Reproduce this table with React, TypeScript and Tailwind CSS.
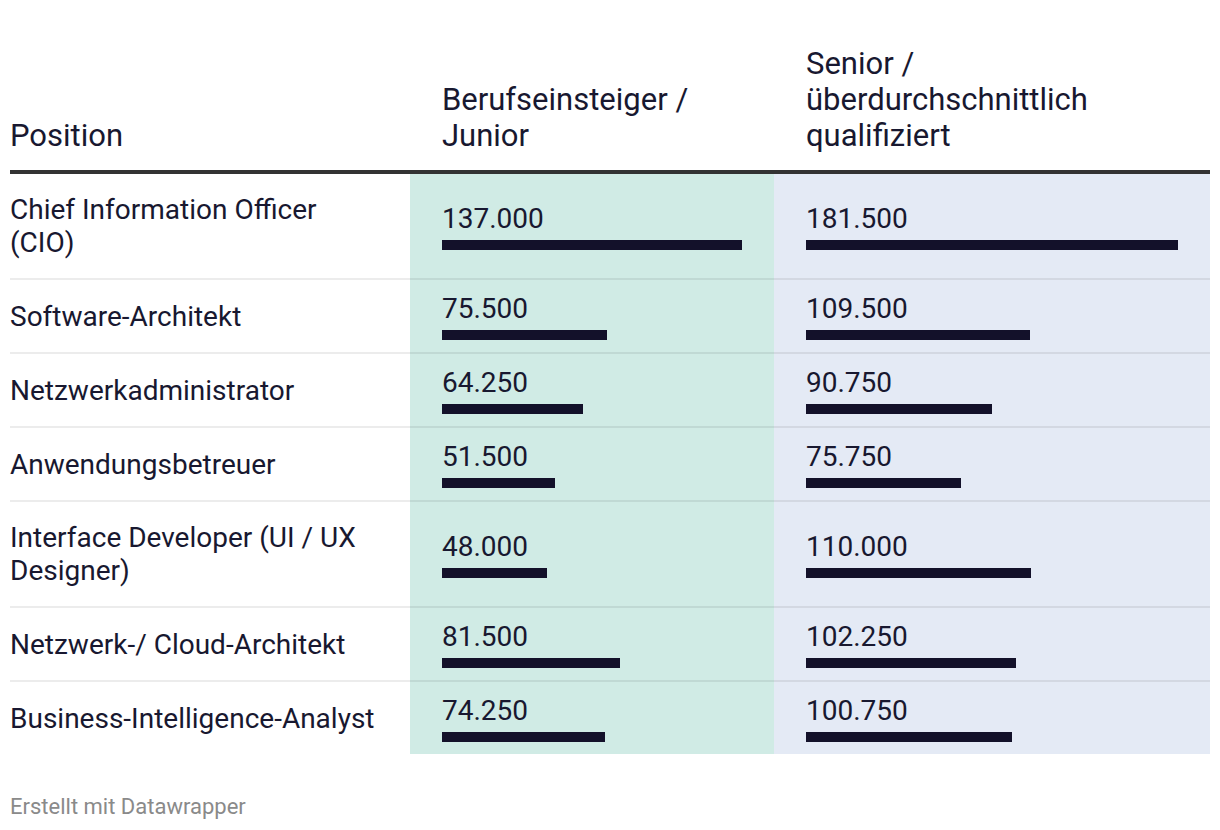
type Row = {
  position: string;
  junior: number;
  senior: number;
};

const rows: Row[] = [
  { position: "Chief Information Officer (CIO)", junior: 137000, senior: 181500 },
  { position: "Software-Architekt", junior: 75500, senior: 109500 },
  { position: "Netzwerkadministrator", junior: 64250, senior: 90750 },
  { position: "Anwendungsbetreuer", junior: 51500, senior: 75750 },
  { position: "Interface Developer (UI / UX Designer)", junior: 48000, senior: 110000 },
  { position: "Netzwerk-/ Cloud-Architekt", junior: 81500, senior: 102250 },
  { position: "Business-Intelligence-Analyst", junior: 74250, senior: 100750 },
];

const maxJunior = Math.max(...rows.map((r) => r.junior));
const maxSenior = Math.max(...rows.map((r) => r.senior));

const fmt = (n: number) => n.toLocaleString("de-DE");

function BarCell({ value, max, bg, last }: { value: number; max: number; bg: string; last: boolean }) {
  return (
    <div
      className={`${bg} ${last ? "" : "border-b-2 border-[rgba(0,0,0,0.075)]"} flex flex-col justify-center px-8`}
    >
      <div className="text-[28px] leading-[33px]">{fmt(value)}</div>
      <div className="mt-[5px] h-[10px] bg-[#13112a]" style={{ width: `${(value / max) * 100}%` }} />
    </div>
  );
}

export default function App() {
  return (
    <div className="min-h-[830px] bg-white px-[10px] pt-[46px] font-['Roboto',sans-serif] text-[#181830]">
      {/* Kopfzeile */}
      <div className="grid grid-cols-[400px_364px_436px] border-b-4 border-[#333333] text-[31px] leading-[36px]">
        <div className="flex items-end pb-[16px] pr-8">Position</div>
        <div className="flex items-end px-8 pb-[16px]">Berufseinsteiger / Junior</div>
        <div className="flex items-end px-8 pb-[16px]">Senior / überdurchschnittlich qualifiziert</div>
      </div>

      {/* Zeilen */}
      {rows.map((row, i) => {
        const last = i === rows.length - 1;
        return (
          <div key={row.position} className="grid grid-cols-[400px_364px_436px]">
            <div
              className={`${
                last ? "min-h-[72px]" : "min-h-[74px] border-b-2 border-[rgba(0,0,0,0.075)]"
              } flex items-center py-[19px] pr-[30px] text-[28px] leading-[33px]`}
            >
              {row.position}
            </div>
            <BarCell value={row.junior} max={maxJunior} bg="bg-[#d0ebe5]" last={last} />
            <BarCell value={row.senior} max={maxSenior} bg="bg-[#e4eaf5]" last={last} />
          </div>
        );
      })}

      {/* Fußzeile */}
      <div className="mt-[40px] text-[22px] leading-[26px] text-[#8a8a8a]">Erstellt mit Datawrapper</div>
    </div>
  );
}
